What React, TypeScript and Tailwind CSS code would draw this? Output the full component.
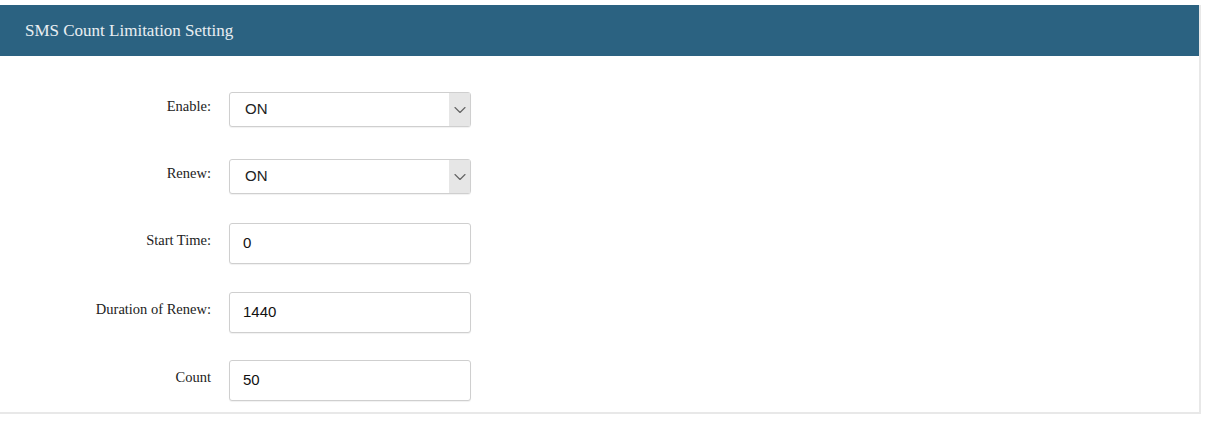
import { ChevronDown } from 'lucide-react'

const serif = "font-['Liberation_Serif','Times_New_Roman',serif]"
const sans = "font-['Liberation_Sans',Arial,sans-serif]"

function Row({ label, mt, children }: { label: string; mt: string; children: React.ReactNode }) {
  return (
    <div className={`flex items-center ${mt}`}>
      <div className={`w-[211px] text-right text-[14.5px] leading-none text-[#222] -mt-[6px] ${serif}`}>{label}</div>
      <div className="ml-[18px]">{children}</div>
    </div>
  )
}

function Select({ value }: { value: string }) {
  return (
    <div className="flex h-[35px] w-[242px] rounded-[3px] border border-[#cfcfcf] bg-white shadow-[0_1px_1px_rgba(0,0,0,0.06)]">
      <div className={`flex flex-1 items-center pl-[15px] text-[15px] text-[#222] ${sans}`}>{value}</div>
      <div className="flex w-[21px] items-center justify-center bg-[#e6e6e6]">
        <ChevronDown className="h-5 w-5 text-[#666]" strokeWidth={1.4} />
      </div>
    </div>
  )
}

function Input({ value }: { value: string }) {
  return (
    <div className={`flex h-[41px] w-[242px] items-center rounded-[3px] border border-[#cfcfcf] bg-white pl-[13px] text-[15px] text-[#111] shadow-[0_1px_1px_rgba(0,0,0,0.06)] ${sans}`}>
      {value}
    </div>
  )
}

export default function App() {
  return (
    <div className="min-h-[428px] bg-white pt-[5px]">
      <div className="w-[1201px] border-r-[2px] border-b-[2px] border-[#e8e8e8] bg-white pb-[11px]">
        <div className={`flex h-[51px] items-center bg-[#2b6281] pl-[25px] text-[17px] text-white/90 ${serif}`}>
          SMS Count Limitation Setting
        </div>
        <div className="flex flex-col">
          <Row label="Enable:" mt="mt-[36px]"><Select value="ON" /></Row>
          <Row label="Renew:" mt="mt-[32px]"><Select value="ON" /></Row>
          <Row label="Start Time:" mt="mt-[29px]"><Input value="0" /></Row>
          <Row label="Duration of Renew:" mt="mt-[28px]"><Input value="1440" /></Row>
          <Row label="Count" mt="mt-[27px]"><Input value="50" /></Row>
        </div>
      </div>
    </div>
  )
}
